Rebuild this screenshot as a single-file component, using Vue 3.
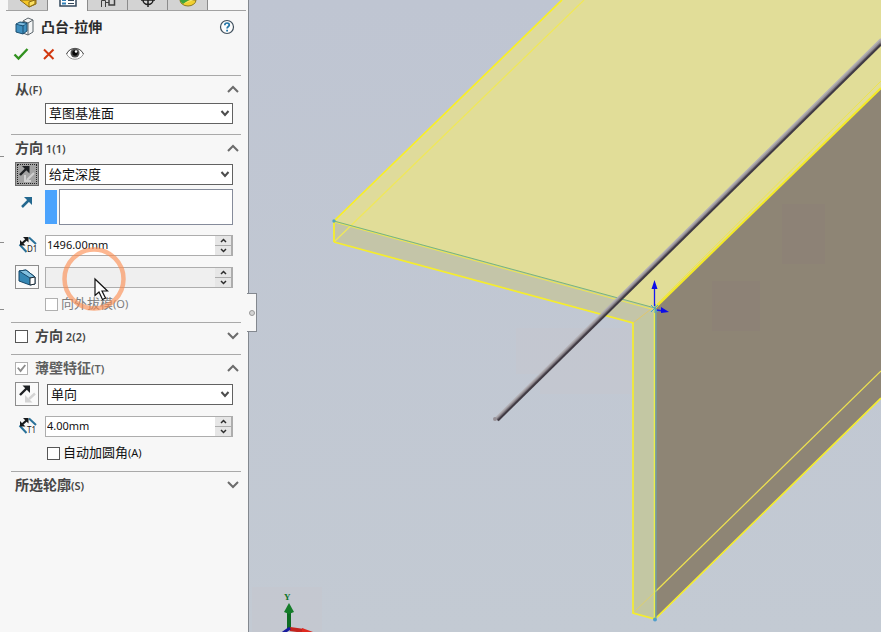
<script setup>
import { reactive, ref } from 'vue'

const open = reactive({ from: true, dir1: true, dir2: false, thin: true, contours: false })
const startFrom = ref('草图基准面')
const endCondition = ref('给定深度')
const thinType = ref('单向')
const depth = ref('1496.00mm')
const draft = ref('')
const thickness = ref('4.00mm')
const dir2On = ref(false)
const thinOn = ref(true)
const autoFillet = ref(false)

const stepped = (text, by) => ((parseFloat(text) || 0) + by).toFixed(2) + 'mm'
</script>

<template>
  <div class="workspace">
    <aside class="panel">
      <nav class="tabs">
        <button class="tab" type="button" aria-label="设计树">
          <svg width="24" height="9" viewBox="0 0 24 9">
            <path d="M4 0l9 7 7-3V0z" fill="#f5c625" stroke="#8a6a13" />
            <path d="M13 2v5l6-3V0z" fill="#fbe063" stroke="#8a6a13" />
          </svg>
        </button>
        <button class="tab active" type="button" aria-label="属性">
          <svg width="24" height="9" viewBox="0 0 24 9">
            <path d="M4 0v6h16V0" fill="#fff" stroke="#33485c" stroke-width="1.500" />
            <path d="M6 0h4M6 3.500h4" stroke="#2f7fb8" stroke-width="2" />
            <path d="M12 .5h6M12 3.500h6" stroke="#33485c" />
          </svg>
        </button>
        <button class="tab" type="button" aria-label="配置">
          <svg width="24" height="9" viewBox="0 0 24 9" fill="none" stroke="#404040">
            <path d="M5.500 7V.5h4V7M9 2.500h4" />
            <path d="M13 0v5h5.500V0" stroke-width="1.500" />
          </svg>
        </button>
        <button class="tab" type="button" aria-label="尺寸">
          <svg width="24" height="9" viewBox="0 0 24 9" fill="none" stroke="#202020" stroke-width="1.500">
            <path d="M7 0a5 4.500 0 0 0 10 0M12 0v7M5 0h14" />
          </svg>
        </button>
        <button class="tab" type="button" aria-label="外观">
          <svg width="24" height="9" viewBox="0 0 24 9">
            <path d="M4 0a8 6 0 0 0 16 0z" fill="#f1cf30" stroke="#8b7920" />
            <path d="M4 0a8 6 0 0 0 3 4l6-4z" fill="#3fa53c" />
            <path d="M7 4l7-4h4z" fill="#f5e66a" />
          </svg>
        </button>
      </nav>

      <header class="title">
        <svg width="20" height="20" viewBox="0 0 20 20" stroke-linejoin="round">
          <path d="M8 4l5-3 5 2v12l-5 3-5-2z" fill="#f3f5f6" stroke="#5b646b" />
          <path d="M13 6l5-3M13 6v12M8 4l5 2" fill="none" stroke="#5b646b" />
          <path d="M1 7l4-2 7 1v8l-4 3-7-2z" fill="#3f8fbf" stroke="#1c4f70" />
          <path d="M1 7l7 2v8M8 9l4-3" fill="none" stroke="#1c4f70" />
          <path d="M2 7l3-1 6 1-3 1z" fill="#8ec4e2" />
        </svg>
        <h1>凸台-拉伸</h1>
        <button class="plain" type="button" aria-label="帮助">
          <svg width="16" height="16" viewBox="0 0 16 16" fill="none">
            <circle cx="8" cy="8" r="6.500" fill="#fdfdfd" stroke="#3f4f5c" stroke-width="1.200" />
            <path d="M5.800 6.200c0-3 4.600-2.900 4.500-.1C10.200 7.500 8.100 7.600 8.100 9.500" stroke="#2577a8" stroke-width="1.700" />
            <path d="M7.200 10.800h1.800v1.700H7.200z" fill="#2577a8" />
          </svg>
        </button>
      </header>

      <div class="actions">
        <button class="plain" type="button" aria-label="确定">
          <svg width="16" height="14" viewBox="0 0 16 14"><path d="M1.500 7.500l4 4L14.500 2" fill="none" stroke="#31911f" stroke-width="2.400" /></svg>
        </button>
        <button class="plain" type="button" aria-label="取消">
          <svg width="12" height="12" viewBox="0 0 12 12"><path d="M1 1.500l9.500 9.500M10.500 1.500L1 11" fill="none" stroke="#d2380f" stroke-width="2" /></svg>
        </button>
        <button class="plain" type="button" aria-label="预览">
          <svg width="20" height="14" viewBox="0 0 20 14">
            <path d="M1.500 7C5-.5 15-.5 18.500 7 15 14 5 14 1.500 7z" fill="#fff" stroke="#9a9a9a" />
            <path d="M1.500 7C5-.5 15-.5 18.500 7" fill="none" stroke="#555" />
            <circle cx="10" cy="6" r="4.500" fill="#505050" />
            <circle cx="10" cy="6" r="2.700" fill="#080808" />
            <circle cx="11" cy="4.500" r="1.200" fill="#fff" />
          </svg>
        </button>
      </div>

      <section>
        <div class="head">
          <h2>从<small>(F)</small></h2>
          <button class="plain" type="button" aria-label="从" @click="open.from = !open.from">
            <svg class="fold" :class="{ closed: !open.from }" width="12" height="8" viewBox="0 0 12 8"><path d="M1 7l5-5 5 5" /></svg>
          </button>
        </div>
        <div v-if="open.from" class="body">
          <div class="row short">
            <span class="lead"></span>
            <div class="combo">
              <select v-model="startFrom" aria-label="从"><option>草图基准面</option><option>等距</option></select>
              <svg width="10" height="7" viewBox="0 0 10 7"><path d="M1.500 1L5 5l3.500-4" /></svg>
            </div>
          </div>
        </div>
      </section>

      <section>
        <div class="head">
          <h2>方向<small> 1(1)</small></h2>
          <button class="plain" type="button" aria-label="方向 1" @click="open.dir1 = !open.dir1">
            <svg class="fold" :class="{ closed: !open.dir1 }" width="12" height="8" viewBox="0 0 12 8"><path d="M1 7l5-5 5 5" /></svg>
          </button>
        </div>
        <div v-if="open.dir1" class="body">
          <div class="row">
            <button class="lead tool pressed" type="button" aria-label="反向">
              <svg width="20" height="20" viewBox="0 0 20 20">
                <path d="M17 9l-7 7M8 11v6h6" fill="none" stroke="#d0d0d0" stroke-width="2" />
                <path d="M3 11l7-7" fill="none" stroke="#1d2023" stroke-width="2.400" /><path d="M5 2h7.500v7.500z" fill="#1d2023" />
              </svg>
            </button>
            <div class="combo">
              <select v-model="endCondition" aria-label="终止条件"><option>给定深度</option><option>完全贯穿</option></select>
              <svg width="10" height="7" viewBox="0 0 10 7"><path d="M1.500 1L5 5l3.500-4" /></svg>
            </div>
          </div>
          <div class="row pick">
            <span class="lead">
              <svg width="14" height="14" viewBox="0 0 14 14"><path d="M2 12l7-7" stroke="#24688f" stroke-width="2.500" /><path d="M4 2h8v8z" fill="#24688f" /></svg>
            </span>
            <span class="marker"></span>
            <textarea class="list" aria-label="拉伸方向"></textarea>
          </div>
          <div class="row">
            <label class="lead" for="depth" aria-label="深度">
              <svg width="24" height="20" viewBox="0 0 24 20">
                <path d="M4.500 9.500l7 7.500M14 2.500l7 6.500" fill="none" stroke="#2a7199" stroke-width="2" />
                <path d="M7 8.500L12 4" stroke="#17191b" stroke-width="2.200" /><path d="M8 2h5.500v5.500zM5 5v5.500h5.500z" fill="#17191b" />
                <text class="glyph" x="12" y="17">D1</text>
              </svg>
            </label>
            <div class="spin">
              <input id="depth" v-model="depth" type="text" />
              <button type="button" aria-label="增加" @click="depth = stepped(depth, 10)"><svg width="7" height="5" viewBox="0 0 7 5"><path d="M1 4l2.500-2.500L6 4" /></svg></button>
              <button type="button" aria-label="减少" @click="depth = stepped(depth, -10)"><svg width="7" height="5" viewBox="0 0 7 5"><path d="M1 1l2.500 2.500L6 1" /></svg></button>
            </div>
          </div>
          <div class="row">
            <button class="lead tool" type="button" aria-label="拔模">
              <svg width="20" height="20" viewBox="0 0 20 20" stroke-linejoin="round">
                <path d="M2 4l7-1 9 7v7l-5 1-11-4z" fill="#3687b4" stroke="#17496a" />
                <path d="M2 4l7-1 9 7-5 1z" fill="#83c0df" stroke="#17496a" />
                <path d="M13 11l5-1v7l-5 1z" fill="#fff" stroke="#1d2b35" />
              </svg>
            </button>
            <div class="spin off">
              <input v-model="draft" type="text" aria-label="拔模角度" disabled />
              <button type="button" aria-label="增加"><svg width="7" height="5" viewBox="0 0 7 5"><path d="M1 4l2.500-2.500L6 4" /></svg></button>
              <button type="button" aria-label="减少"><svg width="7" height="5" viewBox="0 0 7 5"><path d="M1 1l2.500 2.500L6 1" /></svg></button>
            </div>
          </div>
          <div class="row check">
            <span class="lead"></span>
            <label class="off"><input type="checkbox" disabled /><span>向外拔模<small>(O)</small></span></label>
          </div>
        </div>
      </section>

      <section>
        <div class="head">
          <label><input v-model="dir2On" type="checkbox" /><h2>方向<small> 2(2)</small></h2></label>
          <button class="plain" type="button" aria-label="方向 2" @click="open.dir2 = !open.dir2">
            <svg class="fold" :class="{ closed: !open.dir2 }" width="12" height="8" viewBox="0 0 12 8"><path d="M1 7l5-5 5 5" /></svg>
          </button>
        </div>
        <div class="rest"></div>
      </section>

      <section>
        <div class="head soft">
          <label><input v-model="thinOn" type="checkbox" disabled /><h2>薄壁特征<small>(T)</small></h2></label>
          <button class="plain" type="button" aria-label="薄壁特征" @click="open.thin = !open.thin">
            <svg class="fold" :class="{ closed: !open.thin }" width="12" height="8" viewBox="0 0 12 8"><path d="M1 7l5-5 5 5" /></svg>
          </button>
        </div>
        <div v-if="open.thin" class="body">
          <div class="row inset">
            <button class="lead tool" type="button" aria-label="反向">
              <svg width="20" height="20" viewBox="0 0 20 20">
                <path d="M18 9.500L12 15" stroke="#d4d4d4" stroke-width="2.400" /><path d="M8 11v7.500h7.500z" fill="#d4d4d4" />
                <path d="M3 11l7-7" stroke="#1d2023" stroke-width="2.400" /><path d="M5.500 1.500H13V9z" fill="#1d2023" />
              </svg>
            </button>
            <div class="combo">
              <select v-model="thinType" aria-label="类型"><option>单向</option><option>双向</option></select>
              <svg width="10" height="7" viewBox="0 0 10 7"><path d="M1.500 1L5 5l3.500-4" /></svg>
            </div>
          </div>
          <div class="row">
            <label class="lead" for="thickness" aria-label="厚度">
              <svg width="24" height="20" viewBox="0 0 24 20">
                <path d="M4.500 9.500l7 7.500M14 2.500l7 6.500" fill="none" stroke="#2a7199" stroke-width="2" />
                <path d="M7 8.500L12 4" stroke="#17191b" stroke-width="2.200" /><path d="M8 2h5.500v5.500zM5 5v5.500h5.500z" fill="#17191b" />
                <text class="glyph" x="12" y="17">T1</text>
              </svg>
            </label>
            <div class="spin">
              <input id="thickness" v-model="thickness" type="text" />
              <button type="button" aria-label="增加" @click="thickness = stepped(thickness, 1)"><svg width="7" height="5" viewBox="0 0 7 5"><path d="M1 4l2.500-2.500L6 4" /></svg></button>
              <button type="button" aria-label="减少" @click="thickness = stepped(thickness, -1)"><svg width="7" height="5" viewBox="0 0 7 5"><path d="M1 1l2.500 2.500L6 1" /></svg></button>
            </div>
          </div>
          <div class="row check inset">
            <span class="lead"></span>
            <label><input v-model="autoFillet" type="checkbox" /><span>自动加圆角<small>(A)</small></span></label>
          </div>
        </div>
      </section>

      <section>
        <div class="head">
          <h2>所选轮廓<small>(S)</small></h2>
          <button class="plain" type="button" aria-label="所选轮廓" @click="open.contours = !open.contours">
            <svg class="fold" :class="{ closed: !open.contours }" width="12" height="8" viewBox="0 0 12 8"><path d="M1 7l5-5 5 5" /></svg>
          </button>
        </div>
      </section>

      <!-- edge marks, panel splitter and pointer lie over the form -->
      <svg class="ticks" width="4" height="156" viewBox="0 0 4 156"><path d="M0 .5h4M0 86.500h4M0 153.500h4" stroke="#8d8d8d" /></svg>
      <button class="splitter" type="button" aria-label="隐藏面板"><span></span></button>
      <svg class="pointer" width="66" height="66" viewBox="0 0 66 66">
        <circle cx="34" cy="33" r="29.500" fill="none" stroke="#fb8a4e" stroke-opacity=".62" stroke-width="4.500" />
        <path d="M35 33v16.500l4-3.500 3.500 7.500 3-1.500-3.500-7h5.500z" fill="#fff" stroke="#111" stroke-width="1.200" />
      </svg>
    </aside>

    <main class="view">
      <svg class="scene" viewBox="249 0 632 632" preserveAspectRatio="xMinYMin slice" fill="none">
        <defs>
          <linearGradient id="sky" x1="0" y1="0" x2="0" y2="1">
            <stop offset="0" stop-color="#bfc5d2" /><stop offset="1" stop-color="#c3cad3" />
          </linearGradient>
        </defs>
        <path d="M249 0h632v632H249z" fill="url(#sky)" />
        <path d="M252 587h70v45h-70zM516 328h117v66h-93v-20h-24z" fill="#c6c5cd" fill-opacity=".5" />

        <path d="M334 221L562 0h319v88L655 308z" fill="#e1dd98" />
        <path d="M334 221L562 0h22L353 225z" fill="#dfdb9b" />
        <path d="M334 221l321 87v311l-22-6V323l-299-81z" fill="#c4c5a8" />
        <path d="M655 308v311l-22-6V323z" fill="#c3c7a3" />
        <path d="M655 308L881 88v310L655 619z" fill="#8e8575" />
        <path d="M782 204h43v60h-43zM712 281h48v50h-48z" fill="#8b7f78" fill-opacity=".35" />

        <path d="M334 242L584 0" stroke="#f0e858" stroke-width="1.200" />
        <path d="M633 323l22-17" stroke="#e0c86b" />
        <path d="M655 306L881 81" stroke="#eee44f" />
        <path d="M633 613l22-21" stroke="#dfd06a" />
        <path d="M655 592l226-221" stroke="#efe34f" stroke-width="1.200" />
        <path d="M334 242l299 81v290l22 6L881 398" stroke="#f5ed2d" stroke-width="1.700" />
        <path d="M334 242v-21L562 0" stroke="#faf021" stroke-width="1.700" />
        <path d="M655 308L881 88" stroke="#f4ea26" stroke-width="2" />
        <path d="M334 222l321 88" stroke="#ece84f" />
        <path d="M334 221l321 87" stroke="#79b77a" />
        <path d="M654.500 309v309" stroke="#e9ee4b" stroke-width="1.500" />
        <path d="M656 309v309" stroke="#65a9ba" />
        <g stroke-width="2">
          <path d="M496 418L881 39" stroke="#b3b0b4" />
          <path d="M496.500 419L881 41" stroke="#9d989e" />
          <path d="M497 420L881 43" stroke="#746e75" />
          <path d="M498 420.500L881 44.500" stroke="#403a43" />
        </g>
        <circle cx="495" cy="419" r="2" fill="#969096" />

        <circle cx="334" cy="221" r="1.700" fill="#53a6bd" />
        <circle cx="655" cy="619.500" r="2" fill="#4f9ecb" />
        <path d="M651 305l7 7M658 305l-7 7M655 304v9" stroke="#43a1cf" />
        <path d="M654.500 306v-18M657 310l6 1" stroke="#1717f2" stroke-width="1.300" />
        <path d="M654.500 280l3 9h-6zM661 307l8 5-8 1z" fill="#0d0de8" />

        <path d="M289 629v-17" stroke="#0d6c22" stroke-width="4" />
        <path d="M289 603l5 9-5 2-5-2z" fill="#147c29" />
        <path d="M290 629l14 2" stroke="#c4241e" stroke-width="4" /><path d="M302 628l11 4h-11z" fill="#df2920" />
        <path d="M290 628l-7 5" stroke="#171b9e" stroke-width="3" />
        <text class="axis" x="284" y="600">Y</text>
      </svg>
    </main>
  </div>
</template>

<style>
body { margin: 0; }
</style>

<style scoped>
.workspace { display: flex; height: 100vh; overflow: hidden; font: 13px/16px "Noto Sans CJK SC", sans-serif; color: #111; }
.panel { position: relative; z-index: 1; flex: none; width: 249px; background: #f7f7f7; border-right: 1px solid #83888f; box-sizing: border-box; }
button, input, select, textarea { font: inherit; color: inherit; margin: 0; padding: 0; box-sizing: border-box; border-radius: 0; }
h1, h2 { margin: 0; font-size: 14px; line-height: 16px; font-weight: 700; color: #2b2b2b; }
h1 { padding-bottom: 2px; }
h2 { padding-bottom: 3px; color: #454545; }
.soft h2 { color: #606060; }
small { font-family: "Noto Sans", sans-serif; font-size: 11px; line-height: 1; white-space: pre; }
h2 small { font-weight: 600; }
svg { display: block; }
.plain { display: flex; align-items: center; justify-content: center; border: 0; background: none; }

.tabs { display: flex; height: 11px; margin: 0 2px 0 6px; padding-left: 2px; border-bottom: 1px solid #a2a2a2; box-sizing: border-box; }
.tab { width: 40px; height: 10px; display: flex; justify-content: center; overflow: hidden; border: 0; border-right: 1px solid #8b8b8b; background: #d3d3d3; }
.tab.active { height: 11px; background: #f7f7f7; }

.title { display: flex; align-items: center; height: 32px; padding: 0 13px 0 15px; }
.title h1 { flex: 1; margin-left: 6px; }
.actions { display: flex; align-items: center; gap: 14px; height: 22px; padding-left: 13px; margin-bottom: 10px; }
.actions .plain:last-child { margin-left: -4px; }

section { margin: 0 7px 0 11px; border-top: 1px solid #a9a9a9; }
.head { display: flex; align-items: center; justify-content: space-between; height: 27px; padding: 0 2px 0 4px; }
.head label { display: flex; align-items: center; gap: 7px; }
.fold { margin-bottom: 1px; }
.fold path { fill: none; stroke: #6c6c6c; stroke-width: 2; }
.fold.closed { transform: rotate(180deg); }
.rest { height: 4px; }

.body { display: flex; flex-direction: column; gap: 8px; padding: 0 8px 10px 4px; }
.row { display: flex; align-items: center; gap: 6px; height: 24px; }
.row.short { height: 21px; }
.row.check { height: 15px; }
.inset .lead { margin-right: 2px; }
.row.pick { height: 36px; margin-top: -5px; gap: 2px; }
.lead { flex: none; display: flex; align-items: center; justify-content: center; width: 24px; box-sizing: border-box; }
.pick .lead { align-self: flex-start; margin: 6px 4px 0 0; }
.tool { height: 24px; border: 1px solid #8d8d8d; background: #fafafa; }
.tool.pressed { border: 1px solid #6b6b6b; background: #a3a3a3; outline: 1px dotted #222; outline-offset: -3px; }
.marker { width: 12px; height: 34px; background: #4ba3fd; }
.list { flex: 1; min-width: 0; height: 36px; border: 1px solid #858b9a; background: #fff; resize: none; }

.combo { flex: 1; min-width: 0; display: grid; align-items: center; }
.combo > * { grid-area: 1 / 1; }
.combo select { appearance: none; width: 100%; height: 21px; padding: 0 20px 2px 3px; border: 1px solid #626262; background: #fff; line-height: 17px; }
.combo svg { justify-self: end; margin-right: 3px; pointer-events: none; }
.combo path { fill: none; stroke: #4c4c4c; stroke-width: 2; }

.spin { flex: 1; min-width: 0; display: grid; grid-template: 1fr 1fr / 1fr 16px; height: 21px; row-gap: 1px; border: 1px solid #adadad; border-right-width: 2px; background: #adadad; box-sizing: border-box; }
.spin input { grid-row: 1 / 3; width: 100%; min-width: 0; height: 19px; padding: 0 1px 1px; border: 0; background: #fff; font-family: "Noto Sans", sans-serif; font-size: 11px; }
.spin.off input { background: #efefef; }
.spin button { display: flex; align-items: center; justify-content: center; border: 0; background: #e6e6e6; }
.spin path { fill: none; stroke: #2d2d2d; stroke-width: 1.500; }

input[type="checkbox"] { appearance: none; flex: none; width: 13px; height: 13px; border: 1px solid #565656; background: #fff; }
input[type="checkbox"]:disabled { border-color: #b0b0b0; }
input[type="checkbox"]:checked::before { content: ""; display: block; width: 9px; height: 9px; margin: 1px; background: #8c8c8c; clip-path: polygon(0 45%, 18% 35%, 38% 62%, 85% 5%, 100% 18%, 40% 95%); }
.check label { display: flex; align-items: center; gap: 3px; }
.check span { padding-bottom: 3px; }
.check label.off { color: #7c7c7c; }

.glyph { font: 8px "Noto Sans", sans-serif; fill: #17191b; }
.ticks { position: absolute; left: 0; top: 156px; }
.splitter { position: absolute; right: -9px; top: 293px; width: 10px; height: 39px; display: flex; align-items: center; justify-content: center; border: 1px solid #83888f; border-left: 0; background: #f7f7f7; }
.splitter span { width: 6px; height: 6px; border: 1px solid #999; border-radius: 50%; background: #d4d4d4; box-sizing: border-box; }
.pointer { position: absolute; left: 60px; top: 246px; pointer-events: none; }

.view { flex: 1; min-width: 0; background: #c1c7d2; }
.scene { width: 100%; height: 100%; }
.axis { font: bold 9px "Liberation Serif", serif; fill: #11752a; }
</style>
